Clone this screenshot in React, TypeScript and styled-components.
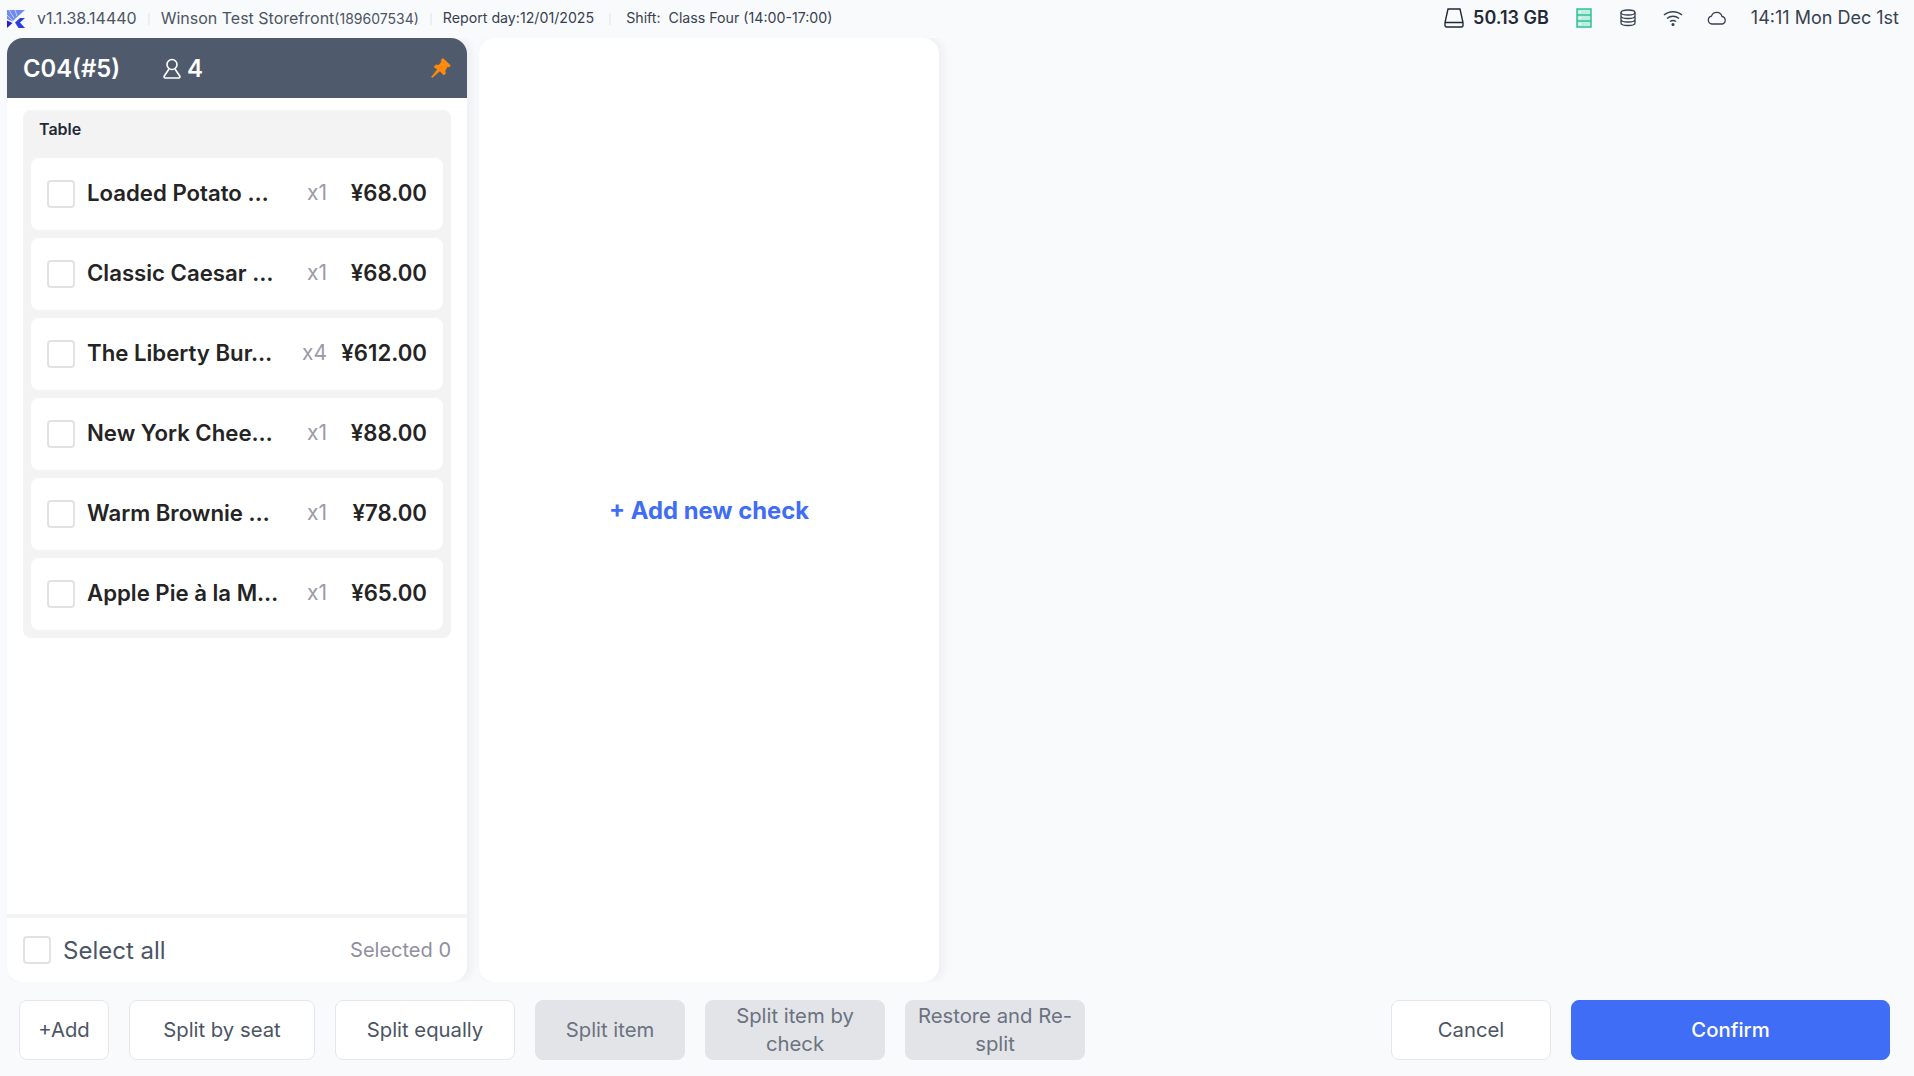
import React from 'react';
import styled, { createGlobalStyle } from 'styled-components';

const Global = createGlobalStyle`
  html, body { margin: 0; padding: 0; background: #f9fafc; }
  body { font-family: Inter, "Noto Sans", sans-serif; width: 1914px; height: 1076px; overflow: hidden; }
  * { box-sizing: border-box; }
`;

const Page = styled.div`
  width: 1914px; height: 1076px; display: flex; flex-direction: column; background: #f9fafc;
`;
const TopBar = styled.header`
  height: 38px; display: flex; align-items: center; justify-content: space-between; padding: 0 15px 1px 7px; flex: none;
`;
const BarGroup = styled.div`
  display: flex; align-items: center;
`;
const Version = styled.span`
  font-size: 16px; color: #4b5563; margin-left: 12px; padding-bottom: 2px;
`;
const Divider = styled.span<{ $gap?: number }>`
  width: 2px; height: 12px; background: #eceef1; margin: 0 ${(p) => p.$gap ?? 11}px;
`;
const Store = styled.span`
  font-size: 16px; color: #4b5563; padding-bottom: 2px;
  small { font-size: 14px; }
`;
const Meta = styled.span`
  font-size: 14.2px; color: #374151; padding-bottom: 2px;
`;
const Disk = styled.span`
  font-size: 18px; font-weight: 600; color: #1f2937; margin-left: 9px; padding-bottom: 2px;
`;
const Clock = styled.span`
  font-size: 18px; color: #374151; margin-left: 24px; padding-bottom: 2px;
`;
const StatusIcon = styled.svg<{ $left?: number }>`
  display: block; flex: none; margin-left: ${(p) => p.$left ?? 0}px; transform: translateY(-1px);
`;
const Main = styled.main`
  flex: 1; min-height: 0; display: flex; gap: 12px; padding-left: 7px; overflow: hidden;
`;
const Panel = styled.section`
  width: 460px; background: #fff; border-radius: 16px; display: flex; flex-direction: column;
  box-shadow: 4px 0 10px rgba(31, 41, 55, 0.06); overflow: hidden;
`;
const PanelHead = styled.div`
  height: 60px; background: #4f5b6d; display: flex; align-items: center; padding: 0 16px; color: #fff; flex: none;
`;
const TableName = styled.span`
  font-size: 23.8px; font-weight: 600; width: 140px;
`;
const Guests = styled.span`
  font-size: 24px; font-weight: 600; margin-left: 6px; flex: 1;
`;
const PanelBody = styled.div`
  flex: 1; min-height: 0; padding: 12px 16px;
`;
const Group = styled.div`
  background: #f3f3f4; border-radius: 8px; padding: 0 8px 8px; display: flex; flex-direction: column; gap: 8px;
`;
const GroupLabel = styled.div`
  height: 40px; padding: 0 0 2px 8px; font-size: 16px; font-weight: 600; color: #1f2937; display: flex; align-items: center;
`;
const Row = styled.div`
  height: 72px; background: #fff; border-radius: 8px; display: flex; align-items: center; padding: 0 16px;
`;
const Box = styled.span`
  width: 28px; height: 28px; border: 2px solid #e2e2e4; border-radius: 4px; background: #fff; flex: none; display: block;
`;
const ItemName = styled.span`
  font-size: 22.2px; font-weight: 600; color: #242424; margin-left: 12px; flex: none; width: 195px; padding-bottom: 3px;
  white-space: nowrap; overflow: hidden;
`;
const Qty = styled.span`
  font-size: 21px; color: #9a9aa8; flex: 1; text-align: right; padding-bottom: 3px;
`;
const Price = styled.span`
  font-size: 22.2px; font-weight: 600; color: #242424; margin-left: 14px; flex: none; width: 86px; text-align: right; padding-bottom: 3px;
`;
const PanelFoot = styled.div`
  height: 68px; flex: none; border-top: 4px solid #f3f3f4; display: flex; align-items: center; padding: 0 16px;
`;
const SelectAll = styled.span`
  font-size: 24px; color: #4b5563; margin-left: 12px; flex: 1;
`;
const SelectedCount = styled.span`
  font-size: 20px; color: #8f8f9d;
`;
const EmptyBody = styled.div`
  flex: 1; display: flex; align-items: center; justify-content: center;
`;
const AddCheck = styled.span`
  font-size: 23.8px; font-weight: 650; color: #3f6df6; padding-top: 1px;
`;
const Footer = styled.footer`
  height: 94px; flex: none; display: flex; align-items: flex-start; justify-content: space-between; padding: 18px 24px 0 19px;
`;
const Btn = styled.button<{ $w: number; $variant?: 'ghost' | 'off' | 'primary' }>`
  width: ${(p) => p.$w}px; height: 60px; font-family: inherit; font-size: 20.3px; line-height: 28px; padding: 0 10px; border-radius: 8px;
  font-weight: ${(p) => (p.$variant === 'primary' ? 500 : 400)};
  border: 1px solid ${(p) => (p.$variant === 'off' ? '#e3e4e8' : p.$variant === 'primary' ? '#3f6df6' : '#e5e7eb')};
  background: ${(p) => (p.$variant === 'off' ? '#e3e4e8' : p.$variant === 'primary' ? '#3f6df6' : '#fff')};
  color: ${(p) => (p.$variant === 'off' ? '#6b7280' : p.$variant === 'primary' ? '#fff' : '#4b5563')};
`;
const BtnGroup = styled.div`
  display: flex; gap: 20px;
`;

const items = [
  ['Loaded Potato …', 'x1', '¥68.00'],
  ['Classic Caesar …', 'x1', '¥68.00'],
  ['The Liberty Bur…', 'x4', '¥612.00'],
  ['New York Chee…', 'x1', '¥88.00'],
  ['Warm Brownie …', 'x1', '¥78.00'],
  ['Apple Pie à la M…', 'x1', '¥65.00'],
];

const Logo = () => (
  <svg width="18" height="18" viewBox="0 0 18 18">
    <path d="M0 0h18L9 8 5.500 11.500 0 9z" fill="#6f8af3" />
    <path d="M2 0l5 8M8 0l2 6M0 5l6 6" stroke="#e7ecfd" strokeWidth="0.7" fill="none" />
    <path d="M0 10.500 5.500 13 0 18z" fill="#2222d4" />
    <path d="M8 12.500 13 8h5l-5 4.500 5 5.500h-6.500z" fill="#2e3edb" />
  </svg>
);

const App = () => (
  <Page>
    <Global />
    <TopBar>
      <BarGroup>
        <Logo />
        <Version>v1.1.38.14440</Version>
        <Divider />
        <Store>Winson Test Storefront<small>(189607534)</small></Store>
        <Divider $gap={11} />
        <Meta>Report day:12/01/2025</Meta>
        <Divider $gap={15} />
        <Meta>Shift:&nbsp; Class Four (14:00-17:00)</Meta>
      </BarGroup>
      <BarGroup>
        <StatusIcon width="20" height="20" viewBox="0 0 20 20" fill="none" stroke="#1f2937" strokeWidth="1.4">
          <path d="M4 1h12l3 13.500V17.500a1.500 1.500 0 0 1-1.500 1.500h-15A1.500 1.500 0 0 1 1 17.500V14.500zM1 14.500h18" />
        </StatusIcon>
        <Disk>50.13 GB</Disk>
        <StatusIcon $left={27} width="16" height="20" viewBox="0 0 16 20" fill="#bfeee0" stroke="#2fc197" strokeWidth="1.5">
          <rect x="1" y="1" width="14" height="18" />
          <path d="M1 7h14M1 13h14" />
          <path d="M3.500 4h1.500M3.500 10h1.500M3.500 16h1.500" stroke="#fff" />
        </StatusIcon>
        <StatusIcon $left={27} width="18" height="18" viewBox="0 0 18 18" fill="none" stroke="#374151" strokeWidth="1.3">
          <ellipse cx="9" cy="3.500" rx="7" ry="2.500" />
          <path d="M2 3.500v10.500c0 1.400 3 2.500 7 2.500s7-1.100 7-2.500V3.500M2 7c0 1.400 3 2.500 7 2.500s7-1.100 7-2.500M2 10.500c0 1.400 3 2.500 7 2.500s7-1.100 7-2.500" />
        </StatusIcon>
        <StatusIcon $left={26} width="20" height="16" viewBox="0 0 20 16" fill="none" stroke="#374151" strokeWidth="1.5">
          <path d="M1 5c5-4.500 13-4.500 18 0M4 8.500c3.500-3 8.500-3 12 0M7 11.500c1.800-1.300 4.200-1.300 6 0" />
          <circle cx="10" cy="14.500" r="0.800" fill="#374151" />
        </StatusIcon>
        <StatusIcon $left={24} width="20" height="14" viewBox="0 0 20 14" fill="none" stroke="#374151" strokeWidth="1.3">
          <path d="M5 13a4 4 0 0 1-.5-7.900A5.500 5.500 0 0 1 15 5.500 3.800 3.800 0 0 1 15 13z" />
        </StatusIcon>
        <Clock>14:11 Mon Dec 1st</Clock>
      </BarGroup>
    </TopBar>
    <Main>
      <Panel>
        <PanelHead>
          <TableName>C04(#5)</TableName>
          <svg width="18" height="21" viewBox="0 0 18 21" fill="none" stroke="#fff" strokeWidth="1.6">
            <circle cx="9" cy="6.500" r="5" />
            <path d="M6 11 1.300 18a1.300 1.300 0 0 0 1 2h13.400a1.300 1.300 0 0 0 1-2L12 11" />
          </svg>
          <Guests>4</Guests>
          <svg width="20" height="20" viewBox="0 0 20 20" fill="#ff8a0c" stroke="#ff8a0c" strokeWidth="0.7" strokeLinejoin="round">
            <path d="M12 .5l7.500 7-1.500 1.500-1.500-.5-2.500 4 .5 3-1.700 1.500-4-4L1.300 19.500.5 19l6-7.500-3.500-2.800L4.800 7l3 .2 2.700-3.200-.3-2z" />
          </svg>
        </PanelHead>
        <PanelBody>
          <Group>
            <GroupLabel>Table</GroupLabel>
            {items.map(([name, qty, price]) => (
              <Row key={name}>
                <Box />
                <ItemName>{name}</ItemName>
                <Qty>{qty}</Qty>
                <Price>{price}</Price>
              </Row>
            ))}
          </Group>
        </PanelBody>
        <PanelFoot>
          <Box />
          <SelectAll>Select all</SelectAll>
          <SelectedCount>Selected 0</SelectedCount>
        </PanelFoot>
      </Panel>
      <Panel>
        <EmptyBody>
          <AddCheck>+ Add new check</AddCheck>
        </EmptyBody>
      </Panel>
    </Main>
    <Footer>
      <BtnGroup>
        <Btn $w={90}>+Add</Btn>
        <Btn $w={186}>Split by seat</Btn>
        <Btn $w={180}>Split equally</Btn>
        <Btn $w={150} $variant="off">Split item</Btn>
        <Btn $w={180} $variant="off">Split item by check</Btn>
        <Btn $w={180} $variant="off">Restore and Re-split</Btn>
      </BtnGroup>
      <BtnGroup>
        <Btn $w={160}>Cancel</Btn>
        <Btn $w={319} $variant="primary">Confirm</Btn>
      </BtnGroup>
    </Footer>
  </Page>
);

export default App;
